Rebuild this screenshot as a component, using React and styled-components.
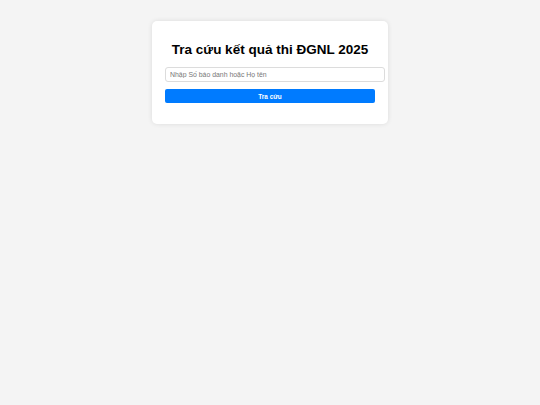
import React from "react";
import styled, { createGlobalStyle } from "styled-components";

const GlobalStyle = createGlobalStyle`
  html, body {
    margin: 0;
    padding: 0;
    background: #f4f4f4;
    font-family: "Liberation Sans", Arial, sans-serif;
  }
  body {
    min-height: 405px;
  }
`;

const Page = styled.div`
  display: flex;
  justify-content: center;
  padding-top: 21px;
`;

const Card = styled.div`
  box-sizing: border-box;
  width: 236px;
  padding: 13px;
  background: #ffffff;
  border-radius: 5px;
  box-shadow: 0 0 5px rgba(0, 0, 0, 0.1);
`;

const Title = styled.h1`
  margin: 7px 0 8px;
  font-size: 13.5px;
  line-height: 18px;
  font-weight: 700;
  color: #000;
  text-align: center;
  white-space: nowrap;
`;

const Input = styled.input`
  display: block;
  box-sizing: content-box;
  width: 100%;
  height: 13px;
  padding: 0 4px;
  margin: 0 0 7px;
  border: 1px solid #dcdcdc;
  border-radius: 3px;
  font-family: "Liberation Sans", Arial, sans-serif;
  font-size: 6.9px;
  color: #333;
  background: #fff;
  outline: none;
  &::placeholder {
    color: #777;
  }
`;

const Button = styled.button`
  display: block;
  width: 100%;
  height: 14px;
  padding: 0;
  margin: 0 0 8px;
  border: none;
  border-radius: 2px;
  background: #007bff;
  color: #fff;
  font-family: "Liberation Sans", Arial, sans-serif;
  font-size: 6.4px;
  font-weight: 700;
  cursor: pointer;
`;

export default function App() {
  return (
    <>
      <GlobalStyle />
      <Page>
        <Card>
          <Title>Tra cứu kết quả thi ĐGNL 2025</Title>
          <Input type="text" placeholder="Nhập Số báo danh hoặc Họ tên" />
          <Button>Tra cứu</Button>
        </Card>
      </Page>
    </>
  );
}
